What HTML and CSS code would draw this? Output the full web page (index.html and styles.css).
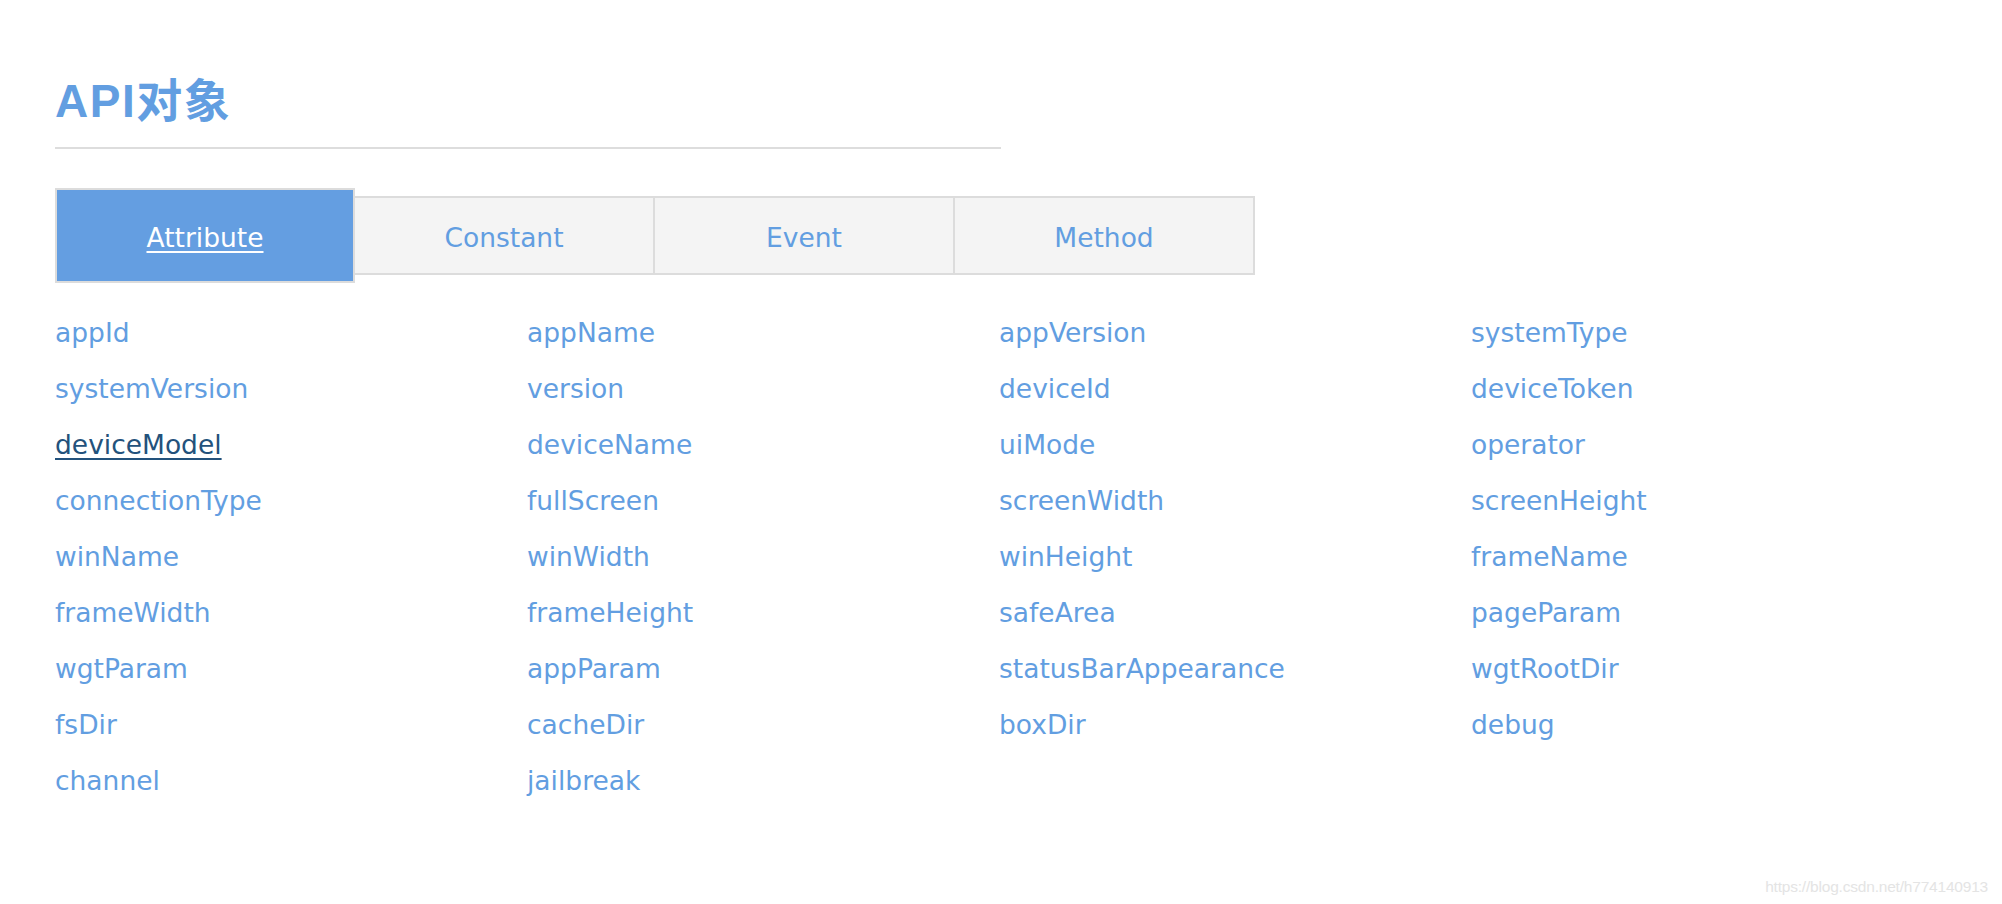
FILE: index.html
```html
<!DOCTYPE html>
<html lang="zh-CN">
<head>
<meta charset="utf-8">
<title>API对象</title>
<link rel="stylesheet" href="styles.css">
</head>
<body>
<div class="page">
  <h1 class="title">API对象</h1>
  <hr class="rule">
  <nav class="tabs">
    <a class="tab tab-active" href="#attribute">Attribute</a>
    <a class="tab" href="#constant">Constant</a>
    <a class="tab" href="#event">Event</a>
    <a class="tab" href="#method">Method</a>
  </nav>
  <ul class="attrs">
    <li><a href="#">appId</a></li>
    <li><a href="#">appName</a></li>
    <li><a href="#">appVersion</a></li>
    <li><a href="#">systemType</a></li>
    <li><a href="#">systemVersion</a></li>
    <li><a href="#">version</a></li>
    <li><a href="#">deviceId</a></li>
    <li><a href="#">deviceToken</a></li>
    <li><a class="hover" href="#">deviceModel</a></li>
    <li><a href="#">deviceName</a></li>
    <li><a href="#">uiMode</a></li>
    <li><a href="#">operator</a></li>
    <li><a href="#">connectionType</a></li>
    <li><a href="#">fullScreen</a></li>
    <li><a href="#">screenWidth</a></li>
    <li><a href="#">screenHeight</a></li>
    <li><a href="#">winName</a></li>
    <li><a href="#">winWidth</a></li>
    <li><a href="#">winHeight</a></li>
    <li><a href="#">frameName</a></li>
    <li><a href="#">frameWidth</a></li>
    <li><a href="#">frameHeight</a></li>
    <li><a href="#">safeArea</a></li>
    <li><a href="#">pageParam</a></li>
    <li><a href="#">wgtParam</a></li>
    <li><a href="#">appParam</a></li>
    <li><a href="#">statusBarAppearance</a></li>
    <li><a href="#">wgtRootDir</a></li>
    <li><a href="#">fsDir</a></li>
    <li><a href="#">cacheDir</a></li>
    <li><a href="#">boxDir</a></li>
    <li><a href="#">debug</a></li>
    <li><a href="#">channel</a></li>
    <li><a href="#">jailbreak</a></li>
  </ul>
</div>
<div class="watermark">https://blog.csdn.net/h774140913</div>
</body>
</html>
```

FILE: styles.css
```css
html, body {
  margin: 0;
  padding: 0;
  background: #ffffff;
}

body {
  position: relative;
  width: 2002px;
  height: 904px;
  overflow: hidden;
  font-family: "DejaVu Sans", "Noto Sans CJK SC", sans-serif;
}

.page {
  padding: 0 55px;
}

.title {
  margin: 76px 0 0 0;
  height: 50px;
  line-height: 50px;
  font-family: "Liberation Sans", "Noto Sans CJK SC", sans-serif;
  font-size: 46px;
  font-weight: bold;
  letter-spacing: 1.5px;
  color: #629ee1;
}

.rule {
  width: 50%;
  margin: 21px 0 0 0;
  height: 0;
  border: 0;
  border-top: 2px solid #dddddd;
}

.tabs {
  display: flex;
  align-items: center;
  margin-top: 39px;
  height: 95px;
}

.tab {
  box-sizing: border-box;
  width: 302px;
  height: 79px;
  display: flex;
  align-items: center;
  justify-content: center;
  padding-top: 4px;
  background: #f4f4f4;
  border: 2px solid #dcdcdc;
  margin-left: -2px;
  font-size: 26.5px;
  color: #629ee1;
  text-decoration: none;
}

.tab:first-child {
  margin-left: 0;
  width: 300px;
}

.tab-active {
  position: relative;
  z-index: 1;
  height: 95px;
  padding-top: 3px;
  background: #649ee1;
  color: #ffffff;
  text-decoration: underline;
  text-decoration-thickness: 2px;
  text-underline-offset: 4px;
}

.attrs {
  list-style: none;
  margin: 22px 0 0 0;
  padding: 0;
  display: grid;
  grid-template-columns: repeat(4, 472px);
}

.attrs li {
  height: 56px;
  line-height: 56px;
  font-size: 26.5px;
}

.attrs a {
  color: #629ee1;
  text-decoration: none;
}

.attrs a.hover {
  color: #23527c;
  text-decoration: underline;
  text-decoration-thickness: 2px;
  text-underline-offset: 4px;
}

.watermark {
  position: absolute;
  right: 14px;
  bottom: 8px;
  font-family: "Liberation Sans", sans-serif;
  font-size: 15.5px;
  color: #e4e4e4;
  letter-spacing: -0.2px;
}
```
